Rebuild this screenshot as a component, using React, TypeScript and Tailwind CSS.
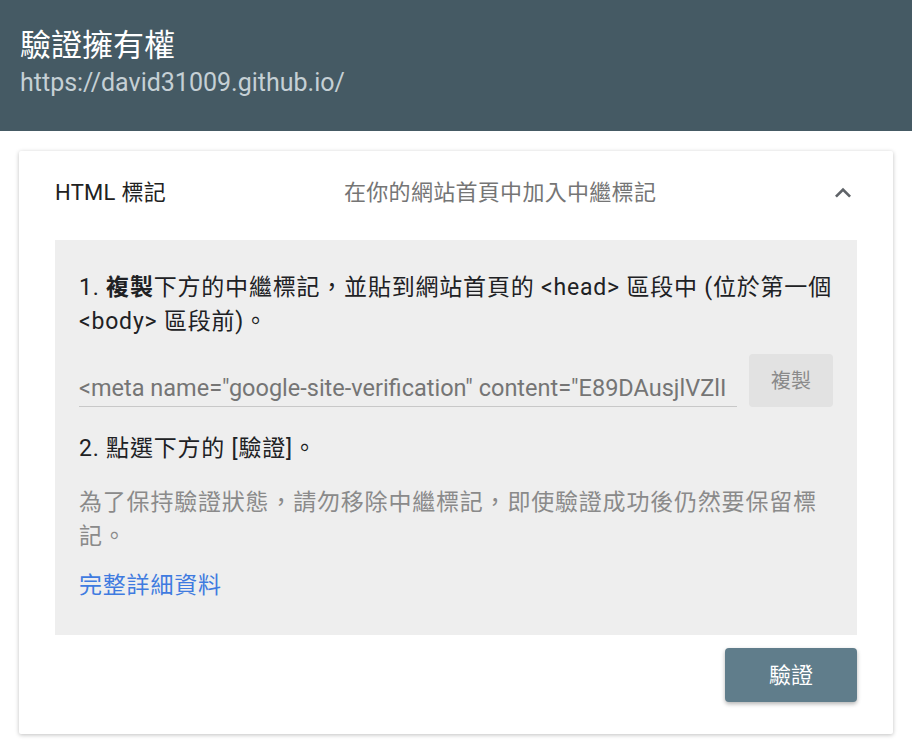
import React from "react";

export default function App() {
  return (
    <div className="min-h-[745px] bg-white font-[Roboto,'Noto_Sans_CJK_TC',sans-serif]">
      <header className="h-[131px] bg-[#455a64] px-[20px] pt-[25px]">
        <div className="text-[31px] leading-[41px] text-white">驗證擁有權</div>
        <div className="text-[25px] leading-[33px] text-[#c5d0d5]">https://david31009.github.io/</div>
      </header>

      <div className="mx-[19px] mt-[20px] rounded-[2px] bg-white px-[36px] pb-[32px] shadow-[0_1px_4px_rgba(0,0,0,0.25)]">
        <div className="grid grid-cols-[289px_1fr_auto] items-center pt-[25px] pb-[31px] text-[22px] leading-[33px] tracking-[0.3px]">
          <div className="text-[#212121]">HTML 標記</div>
          <div className="text-[#757575]">在你的網站首頁中加入中繼標記</div>
          <svg width="32" height="32" viewBox="0 0 24 24" className="mr-[-2px]">
            <path d="M7.41 15.41L12 10.83l4.59 4.58L18 14l-6-6-6 6z" fill="#5f6368" />
          </svg>
        </div>

        <div className="bg-[#eeeeee] px-[24px] pt-[31px] pb-[32px] text-[23px] leading-[34px] tracking-[0.8px]">
          <p className="text-[#202124]">
            1. <span className="font-bold">複製</span>下方的中繼標記，並貼到網站首頁的 &lt;head&gt; 區段中 (位於第一個
            <br />
            &lt;body&gt; 區段前)。
          </p>

          <div className="mt-[15px] flex items-end gap-[12px]">
            <div className="min-w-0 flex-1 overflow-hidden border-b border-[#c8c8c8] pb-[1px]">
              <div className="overflow-hidden whitespace-nowrap text-[23.5px] leading-[33px] tracking-normal text-[#757575]">
                &lt;meta name="google-site-verification" content="E89DAusjlVZlI
              </div>
            </div>
            <div className="flex h-[53px] w-[84px] shrink-0 items-center justify-center rounded-[4px] bg-[#e2e2e2] text-[20px] tracking-normal text-[#8a8a8a]">
              複製
            </div>
          </div>

          <p className="mt-[25px] text-[#202124]">2. 點選下方的 [驗證]。</p>

          <p className="mt-[20px] text-[#8a8a8a]">
            為了保持驗證狀態，請勿移除中繼標記，即使驗證成功後仍然要保留標
            <br />
            記。
          </p>

          <p className="mt-[15px] text-[#3f7be0]">完整詳細資料</p>
        </div>

        <div className="mt-[13px] flex justify-end">
          <div className="flex h-[54px] w-[132px] items-center justify-center rounded-[4px] bg-[#607d8b] text-[22px] text-white shadow-[0_2px_4px_rgba(0,0,0,0.3)]">
            驗證
          </div>
        </div>
      </div>
    </div>
  );
}
